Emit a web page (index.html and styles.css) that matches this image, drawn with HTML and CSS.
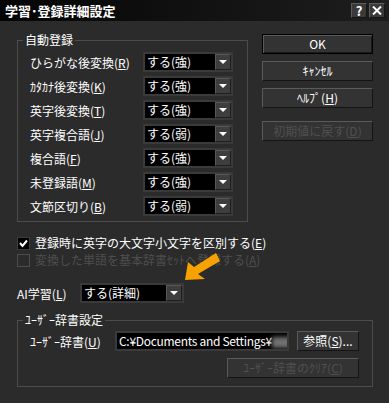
FILE: index.html
```html
<!DOCTYPE html>
<html lang="ja">
<head>
<meta charset="UTF-8">
<title>学習･登録詳細設定</title>
<link rel="stylesheet" href="styles.css">
</head>
<body>

<div class="window">
    <div class="titlebar">
        <span class="title">学習･登録詳細設定</span>
        <div class="tb-btns">
            <span class="tb-btn">?</span>
            <span class="tb-btn">
                <svg width="10" height="9" viewBox="0 0 10 9"><path d="M1 0.5 L9 8.5 M9 0.5 L1 8.5" stroke="#fff" stroke-width="2"/></svg>
            </span>
        </div>
    </div>

    <div class="content">
        <div class="top">
            <div class="left">
                <fieldset class="group">
                    <legend>自動登録</legend>
                    <div class="rows">
                        <span>ひらがな後変換(<u>R</u>)</span>
                        <div class="combo"><span class="val">する(強)</span><span class="drop"></span></div>
                        <span>ｶﾀｶﾅ後変換(<u>K</u>)</span>
                        <div class="combo"><span class="val">する(強)</span><span class="drop"></span></div>
                        <span>英字後変換(<u>T</u>)</span>
                        <div class="combo"><span class="val">する(強)</span><span class="drop"></span></div>
                        <span>英字複合語(<u>J</u>)</span>
                        <div class="combo"><span class="val">する(弱)</span><span class="drop"></span></div>
                        <span>複合語(<u>F</u>)</span>
                        <div class="combo"><span class="val">する(強)</span><span class="drop"></span></div>
                        <span>未登録語(<u>M</u>)</span>
                        <div class="combo"><span class="val">する(強)</span><span class="drop"></span></div>
                        <span>文節区切り(<u>B</u>)</span>
                        <div class="combo"><span class="val">する(弱)</span><span class="drop"></span></div>
                    </div>
                </fieldset>

                <div class="checks">
                    <div class="check">
                        <span class="box">
                            <svg width="11" height="11" viewBox="0 0 11 11"><path d="M2 5 L4.5 8 L9 2.5" fill="none" stroke="#fff" stroke-width="2"/></svg>
                        </span>
                        <span>登録時に英字の大文字小文字を区別する(<u>E</u>)</span>
                    </div>
                    <div class="check disabled">
                        <span class="box"></span>
                        <span>変換した単語を基本辞書ｾｯﾄへ登録する(<u>A</u>)</span>
                    </div>
                </div>

                <div class="ai-row">
                    <span class="ai-label">AI学習(<u>L</u>)</span>
                    <div class="combo wide"><span class="val">する(詳細)</span><span class="drop"></span></div>
                </div>
            </div>

            <div class="buttons">
                <div class="btn default">OK</div>
                <div class="btn">ｷｬﾝｾﾙ</div>
                <div class="btn">ﾍﾙﾌﾟ(<u>H</u>)</div>
                <div class="btn disabled">初期値に戻す(<u>D</u>)</div>
            </div>
        </div>

        <fieldset class="group user">
            <legend>ﾕｰｻﾞｰ辞書設定</legend>
            <div class="user-rows">
                <div class="user-row">
                    <span class="user-label">ﾕｰｻﾞｰ辞書(<u>U</u>)</span>
                    <div class="path">C:¥Documents and Settings¥<span class="blur"></span></div>
                    <div class="btn browse">参照(<u>S</u>)...</div>
                </div>
                <div class="user-row end">
                    <div class="btn disabled clear">ﾕｰｻﾞｰ辞書のｸﾘｱ(<u>C</u>)</div>
                </div>
            </div>
        </fieldset>
    </div>

    <svg class="arrow" width="45" height="36" viewBox="180 248 45 36">
        <polygon points="185,280 188,262 194,267 216,253 220,261 198,274 205,279" fill="#f7a200"/>
    </svg>
</div>

</body>
</html>
```

FILE: styles.css
```css
* {
    box-sizing: border-box;
}

body {
    margin: 0;
    background-color: #2b2b2b;
    font-family: "Noto Sans CJK JP", "Noto Sans", sans-serif;
    font-size: 12px;
    color: #fff;
}

u {
    text-underline-offset: 1px;
}

.window {
    position: relative;
    width: 389px;
    height: 403px;
    background-color: #2b2b2b;
    overflow: hidden;
}

.titlebar {
    height: 21px;
    display: flex;
    align-items: center;
    justify-content: space-between;
    padding: 0 4px 0 5px;
    background: linear-gradient(90deg, #040404, #1e1e1e);
}

.title {
    font-size: 13px;
    font-weight: bold;
    line-height: 21px;
}

.tb-btns {
    display: flex;
    gap: 2px;
}

.tb-btn {
    width: 16px;
    height: 15px;
    display: flex;
    align-items: center;
    justify-content: center;
    background-color: #3a3a3a;
    border: 1px solid;
    border-color: #5c5c5c #161616 #161616 #5c5c5c;
    font-size: 13px;
    font-weight: bold;
    line-height: 13px;
}

.content {
    padding: 12px 16px 0 17px;
}

.top {
    display: flex;
    gap: 14px;
}

.left {
    width: 231px;
}

fieldset.group {
    margin: 0;
    padding: 0;
    min-width: 0;
    border: 1px solid #4c4c4c;
}

fieldset.group legend {
    margin-left: 5px;
    padding: 0 2px;
    line-height: 14px;
}

.rows {
    display: grid;
    grid-template-columns: 113px 90px;
    row-gap: 4px;
    align-items: center;
    padding: 5px 0 5px 12px;
}

.combo {
    display: flex;
    height: 20px;
    border: 2px solid #3a3a3a;
    background-color: #000;
}

.combo.wide {
    width: 104px;
}

.combo .val {
    flex: 1;
    padding-left: 2px;
    line-height: 16px;
    white-space: nowrap;
}

.drop {
    width: 16px;
    display: flex;
    align-items: center;
    justify-content: center;
    background-color: #3e3e3e;
    border: 1px solid;
    border-color: #585858 #1e1e1e #1e1e1e #585858;
}

.drop::after {
    content: "";
    border-left: 4px solid transparent;
    border-right: 4px solid transparent;
    border-top: 4px solid #fff;
}

.checks {
    margin-top: 13px;
    display: flex;
    flex-direction: column;
    gap: 1px;
}

.check {
    display: flex;
    align-items: center;
    gap: 5px;
    height: 16px;
    line-height: 16px;
    white-space: nowrap;
}

.box {
    flex: none;
    width: 13px;
    height: 13px;
    display: flex;
    align-items: center;
    justify-content: center;
    background-color: #000;
    border: 1px solid #3c3c3c;
}

.check.disabled {
    color: #4e4e4e;
}

.check.disabled .box {
    background-color: #2b2b2b;
    border: 1px solid #4c4c4c;
}

.ai-row {
    margin-top: 15px;
    display: flex;
    align-items: center;
}

.ai-label {
    width: 63px;
}

.buttons {
    width: 111px;
    margin-top: 1px;
    display: flex;
    flex-direction: column;
    gap: 7px;
}

.btn {
    height: 20px;
    background-color: #333;
    border: 1px solid;
    border-color: #5a5a5a #141414 #141414 #5a5a5a;
    text-align: center;
    line-height: 18px;
    white-space: nowrap;
}

.btn.default {
    border-color: #000;
    box-shadow: inset 1px 1px #5a5a5a, inset -1px -1px #1a1a1a;
}

.btn.disabled {
    color: #505050;
}

.buttons .btn.disabled {
    margin-top: 6px;
}

fieldset.user {
    margin-top: 10px;
}

.user-rows {
    padding: 4px 13px 8px 12px;
}

.user-row {
    display: flex;
    align-items: center;
}

.user-row.end {
    justify-content: flex-end;
    margin-top: 7px;
}

.user-label {
    width: 85px;
    white-space: nowrap;
}

.path {
    width: 174px;
    height: 20px;
    border: 2px solid #3a3a3a;
    background-color: #000;
    padding-left: 2px;
    line-height: 16px;
    white-space: nowrap;
    overflow: hidden;
    letter-spacing: -0.3px;
}

.blur {
    display: inline-block;
    width: 22px;
    height: 11px;
    vertical-align: middle;
    background-color: #707070;
    filter: blur(2px);
}

.browse {
    width: 62px;
    margin-left: 8px;
}

.clear {
    width: 132px;
}

.arrow {
    position: absolute;
    left: 180px;
    top: 248px;
}
```
